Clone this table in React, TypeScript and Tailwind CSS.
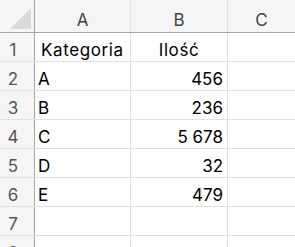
import React from 'react';

const rows: { n: number; a: string; b: string; head?: boolean }[] = [
  { n: 1, a: 'Kategoria', b: 'Ilość', head: true },
  { n: 2, a: 'A', b: '456' },
  { n: 3, a: 'B', b: '236' },
  { n: 4, a: 'C', b: '5\u00a0678' },
  { n: 5, a: 'D', b: '32' },
  { n: 6, a: 'E', b: '479' },
  { n: 7, a: '', b: '' },
  { n: 8, a: '', b: '' },
];

export default function App() {
  return (
    <div className="w-[295px] h-[247px] overflow-hidden bg-white text-[17px] leading-none text-black" style={{ fontFamily: 'Inter, "Noto Sans", sans-serif' }}>
      {/* column headers */}
      <div className="flex h-[33px] bg-[#f5f5f5] border-b border-[#a6a6a6]">
        <div className="w-[35px] shrink-0 relative border-r border-[#a6a6a6]">
          <svg className="absolute left-[10px] top-[8px]" width="22" height="22" viewBox="0 0 22 22">
            <polygon points="0,21 21,21 21,0" fill="#d9d9d9" />
          </svg>
        </div>
        {['A', 'B', 'C'].map((l, i) => (
          <div
            key={l}
            className={`flex items-end justify-center pb-[3px] text-[#444] ${i === 0 ? 'w-[96px]' : i === 1 ? 'w-[97px]' : 'flex-1'} ${i < 2 ? 'border-r border-[#e1e1e1]' : ''}`}
          >
            {l}
          </div>
        ))}
      </div>
      {rows.map((r) => (
        <div key={r.n} className="flex h-[29px] border-b border-[#e1e1e1]">
          <div className="w-[35px] shrink-0 flex items-end justify-center pr-2 pb-[2px] bg-[#f5f5f5] border-r border-[#a6a6a6] text-[#555]">
            {r.n}
          </div>
          <div className={`w-[96px] shrink-0 flex items-end pb-[2px] border-r border-[#e1e1e1] tracking-[0.6px] ${r.head ? 'pl-[6px]' : 'pl-[3px]'}`}>
            {r.a}
          </div>
          <div className={`w-[97px] shrink-0 flex items-end pb-[2px] border-r border-[#e1e1e1] ${r.head ? 'justify-center tracking-[0.6px]' : 'justify-end pr-[4px]'}`}>
            {r.b}
          </div>
          <div className="flex-1" />
        </div>
      ))}
    </div>
  );
}
